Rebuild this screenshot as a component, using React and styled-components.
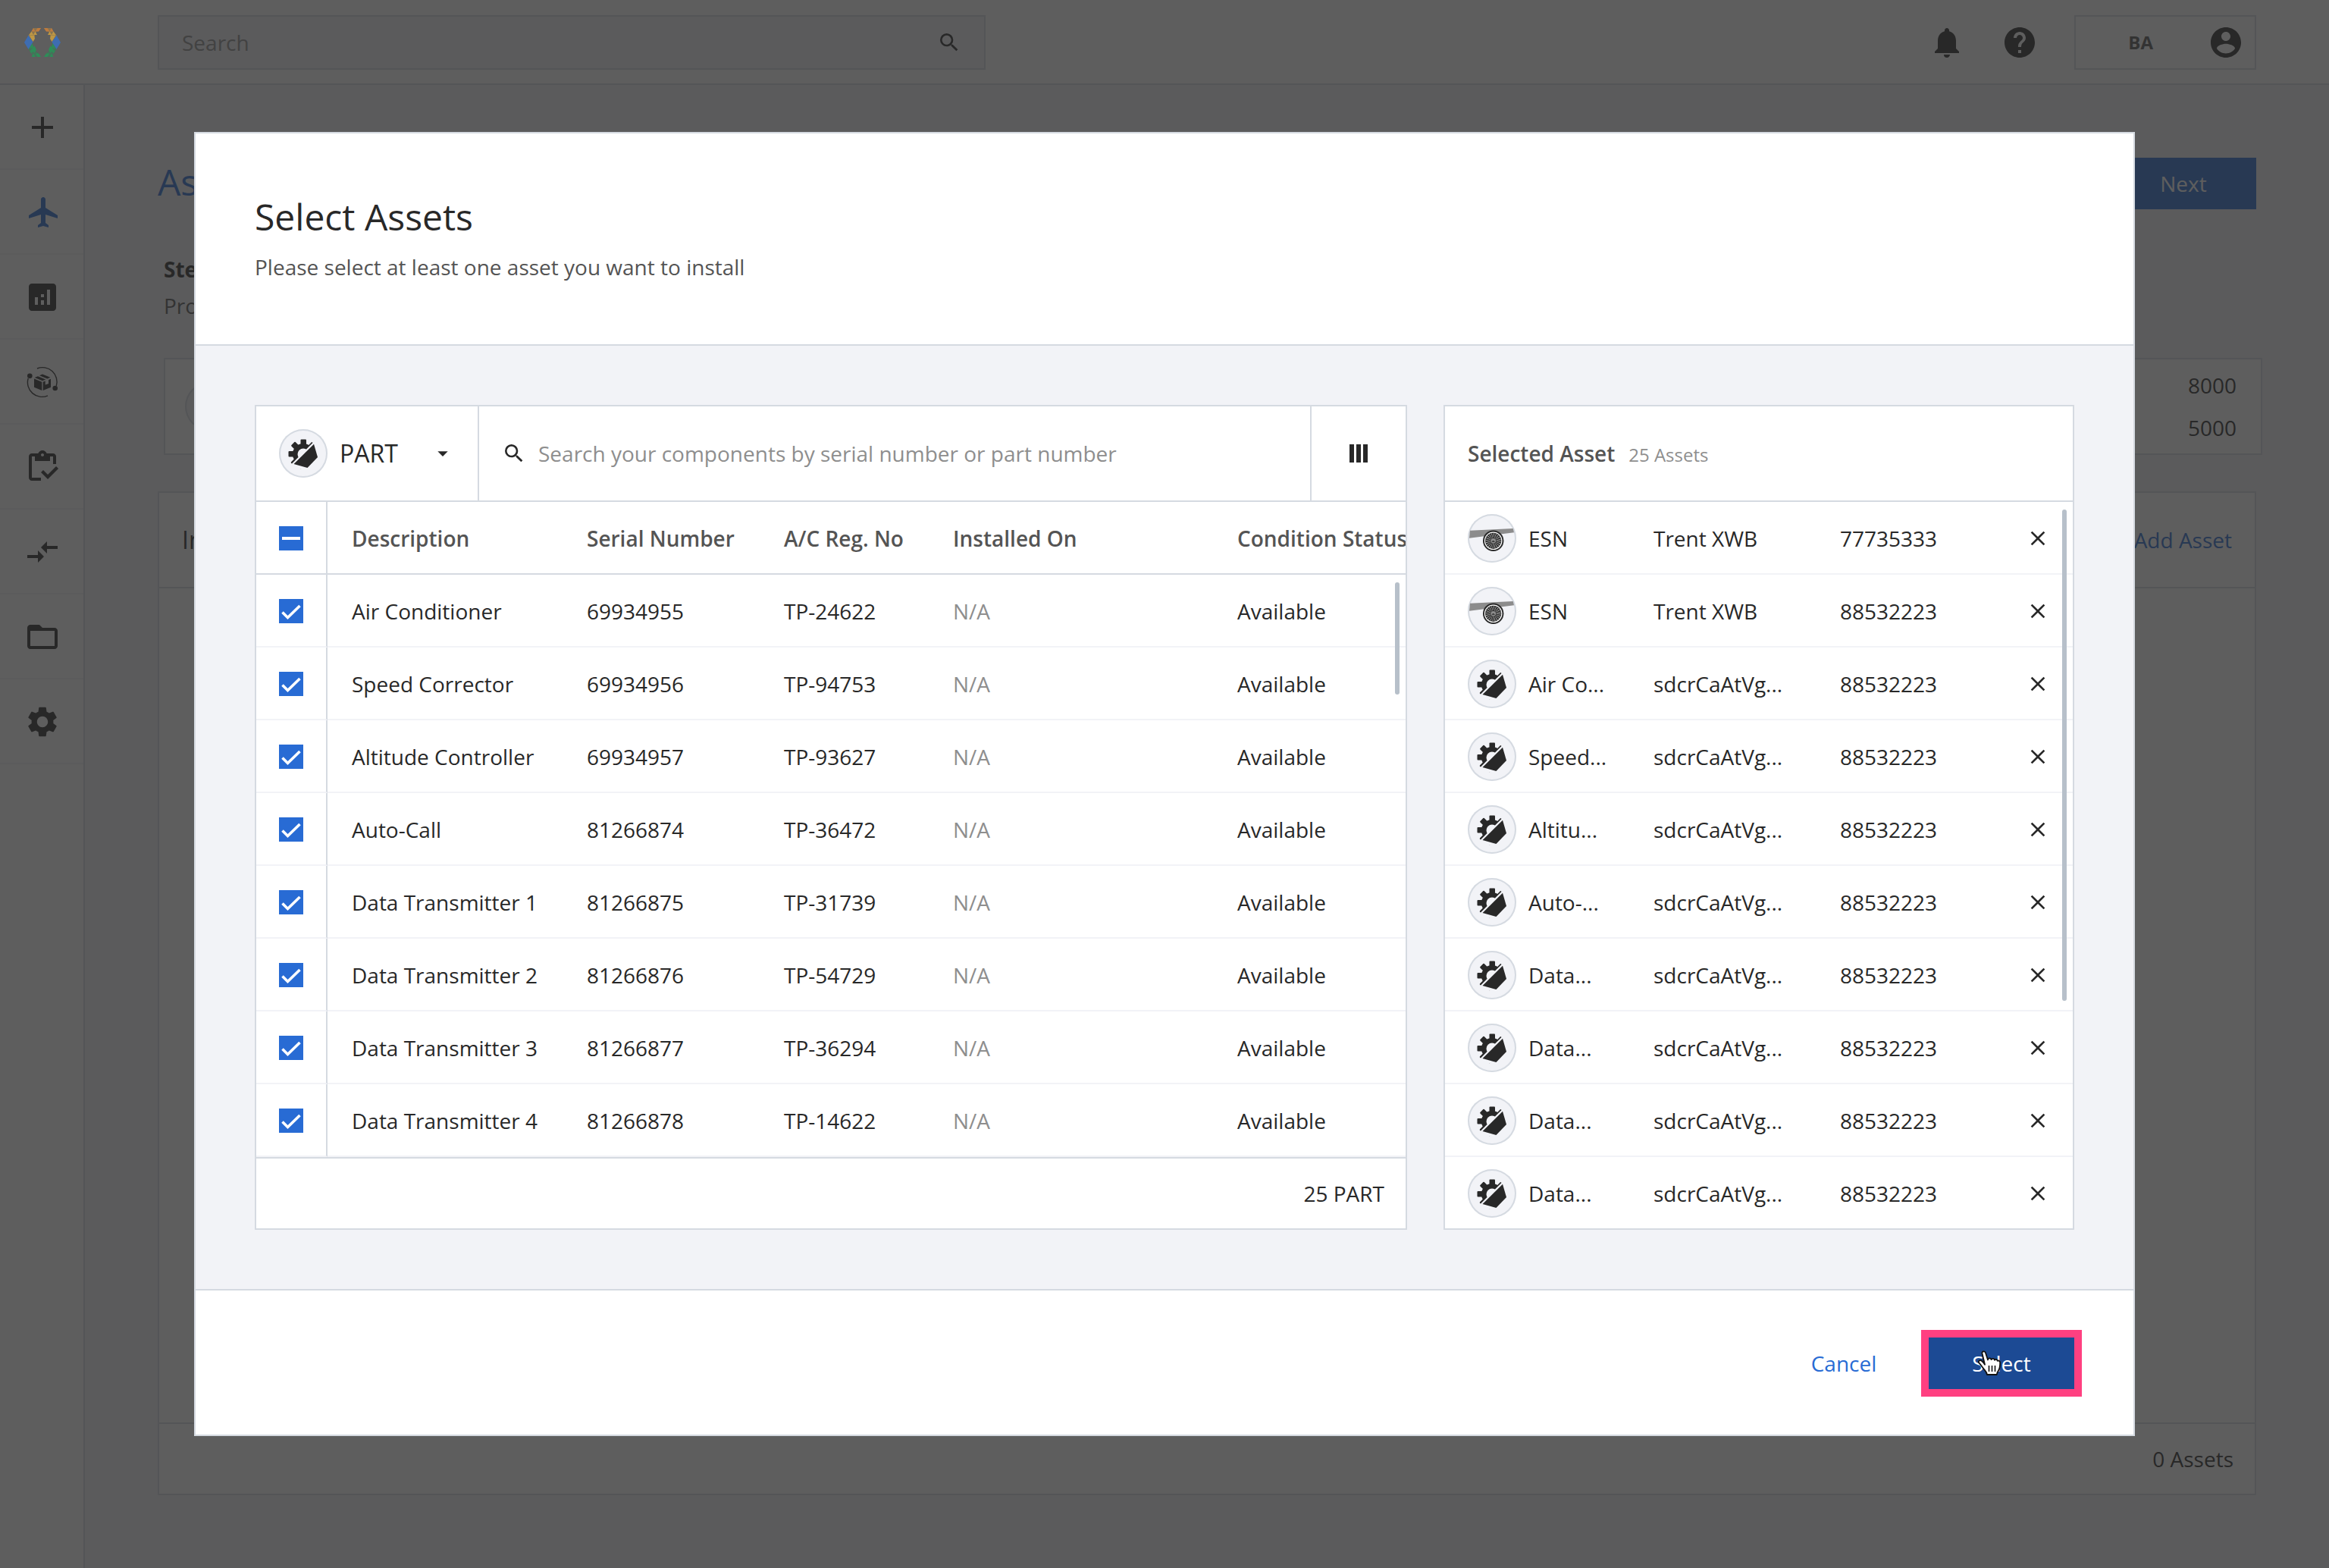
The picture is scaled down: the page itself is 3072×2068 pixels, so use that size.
// Package
import React, { useState } from "react";
import styled, { createGlobalStyle } from "styled-components";
import {
	MdAdd,
	MdAnalytics,
	MdArrowDropDown,
	MdClose,
	MdCompareArrows,
	MdHelp,
	MdNotifications,
	MdSearch,
	MdSettings,
} from "react-icons/md";

/* Data */

const COLUMNS = [
	{ label: "Description", width: 310 },
	{ label: "Serial Number", width: 260 },
	{ label: "A/C Reg. No", width: 223 },
	{ label: "Installed On", width: 375 },
	{ label: "Condition Status" },
];

const PARTS = [
	["Air Conditioner", "69934955", "TP-24622"],
	["Speed Corrector", "69934956", "TP-94753"],
	["Altitude Controller", "69934957", "TP-93627"],
	["Auto-Call", "81266874", "TP-36472"],
	["Data Transmitter 1", "81266875", "TP-31739"],
	["Data Transmitter 2", "81266876", "TP-54729"],
	["Data Transmitter 3", "81266877", "TP-36294"],
	["Data Transmitter 4", "81266878", "TP-14622"],
];

const SELECTED = [
	{ type: "engine", name: "ESN", model: "Trent XWB", serial: "77735333" },
	{ type: "engine", name: "ESN", model: "Trent XWB", serial: "88532223" },
	...["Air Co...", "Speed...", "Altitu...", "Auto-...", "Data...", "Data...", "Data...", "Data..."].map(
		name => ({ type: "part", name, model: "sdcrCaAtVg...", serial: "88532223" })
	),
];

/* Styles */

const colors = {
	text: "#282828",
	soft: "#545454",
	muted: "#8e8e8e",
	blue: "#286bd4",
	navy: "#1c4a94",
	pink: "#ff4081",
	border: "#d5dae1",
	light: "#f2f3f7",
	thumb: "#b7c0ca",
};

const GlobalStyle = createGlobalStyle`
	* {
		box-sizing: border-box;
	}
	body {
		margin: 0;
		background: ${colors.light};
		color: ${colors.text};
		font: 400 28px/48px "Open Sans", sans-serif;
	}
	button, input, select {
		margin: 0;
		padding: 0;
		border: 0;
		background: none;
		color: inherit;
		font: inherit;
	}
	button {
		cursor: pointer;
	}
	h1, h2, p {
		margin: 0;
		font-weight: 400;
	}
	svg {
		display: block;
		flex: none;
	}
`;

// Page
const Page = styled.div`
	display: flex;
	flex-direction: column;
	min-height: 100vh;
`;

const Header = styled.header`
	display: flex;
	align-items: center;
	height: 112px;
	padding: 2px 96px 0 0;
	border-bottom: 2px solid ${colors.border};
	background: #fff;
`;

const LogoLink = styled.a`
	position: relative;
	z-index: 3;
	display: flex;
	justify-content: center;
	width: 112px;
	margin-right: 96px;
	opacity: 0.6;
`;

const HeaderSearch = styled.label`
	display: flex;
	align-items: center;
	flex: 0 1 1092px;
	height: 72px;
	padding: 0 30px;
	border: 2px solid ${colors.border};
	background: ${colors.light};
`;

const SearchInput = styled.input`
	flex: 1;
	min-width: 0;
	outline: 0;
	&::placeholder {
		color: ${colors.muted};
		opacity: 1;
	}
`;

const HeaderActions = styled.div`
	display: flex;
	align-items: center;
	gap: 48px;
	margin-left: auto;
`;

const UserButton = styled.button`
	display: flex;
	align-items: center;
	justify-content: flex-end;
	gap: 72px;
	width: 240px;
	height: 72px;
	padding-right: 14px;
	border: 2px solid ${colors.border};
`;

const UserInitials = styled.span`
	color: ${colors.soft};
	font-size: 24px;
	font-weight: 700;
`;

const Body = styled.div`
	display: flex;
	flex: 1;
`;

const Sidebar = styled.nav`
	flex: none;
	width: 112px;
	border-right: 2px solid ${colors.border};
	background: #fff;
`;

const SidebarLink = styled.a`
	display: flex;
	align-items: center;
	justify-content: center;
	height: 112px;
	padding: 2px 0 0 2px;
	border-bottom: 2px solid ${colors.light};
	color: ${props => (props.$active ? colors.blue : colors.text)};
`;

const Main = styled.main`
	display: flex;
	flex-direction: column;
	flex: 1;
	padding: 96px;
`;

const TitleRow = styled.div`
	display: flex;
	justify-content: space-between;
`;

const PageTitle = styled.h1`
	color: ${colors.blue};
	font-size: 48px;
	line-height: 64px;
`;

const Button = styled.button`
	position: relative;
	width: 192px;
	height: 68px;
	background: ${props => (props.$ghost ? "none" : props.$hover ? colors.navy : colors.blue)};
	color: ${props => (props.$ghost ? colors.blue : "#fff")};
	outline: ${props => (props.$hover ? `10px solid ${colors.pink}` : "0")};
`;

const StepSection = styled.section`
	margin: 55px -8px 48px 8px;
`;

const StepName = styled.p`
	font-weight: 700;
`;

const StepText = styled.p`
	color: ${colors.soft};
`;

const TargetCard = styled.div`
	display: flex;
	align-items: center;
	justify-content: space-between;
	height: 128px;
	margin-top: 45px;
	padding: 0 32px 0 26px;
	border: 2px solid ${colors.border};
	background: #fff;
	line-height: 56px;
`;

const InstallCard = styled.section`
	display: flex;
	flex-direction: column;
	flex: 1;
	border: 2px solid ${colors.border};
	background: #fff;
`;

const InstallHeader = styled.div`
	display: flex;
	align-items: center;
	justify-content: space-between;
	height: 126px;
	padding: 0 30px;
	border-bottom: 2px solid ${colors.border};
`;

const InstallTitle = styled.h2`
	font-size: 32px;
`;

const AddLink = styled.a`
	color: ${colors.blue};
	text-decoration: none;
`;

const CardFooter = styled.footer`
	display: flex;
	align-items: center;
	justify-content: flex-end;
	height: 94px;
	margin-top: auto;
	padding: 0 28px;
	border-top: 2px solid ${colors.border};
`;

// Modal
const Backdrop = styled.div`
	position: fixed;
	inset: 0;
	z-index: 2;
	display: flex;
	align-items: center;
	padding: 0 256px;
	background: rgba(40, 40, 40, 0.75);
`;

const Dialog = styled.section`
	flex: 1;
	min-width: 0;
	border: 2px solid ${colors.border};
	background: #fff;
`;

const DialogHeader = styled.header`
	display: flex;
	flex-direction: column;
	gap: 12px;
	height: 280px;
	padding: 80px 78px;
	border-bottom: 2px solid ${colors.border};
`;

const DialogTitle = styled.h2`
	font-size: 48px;
	line-height: 60px;
`;

const DialogText = styled.p`
	color: ${colors.soft};
`;

const DialogBody = styled.div`
	display: grid;
	grid-template-columns: minmax(0, 1520fr) minmax(0, 832fr);
	gap: 48px;
	padding: 78px;
	background: ${colors.light};
`;

const DialogFooter = styled.footer`
	display: flex;
	justify-content: flex-end;
	gap: 16px;
	padding: 62px 78px 60px;
	border-top: 2px solid ${colors.border};
`;

const Panel = styled.div`
	display: flex;
	flex-direction: column;
	border: 2px solid ${colors.border};
	background: #fff;
`;

const Toolbar = styled.div`
	display: flex;
	align-items: stretch;
	height: 126px;
	border-bottom: 2px solid ${colors.border};
`;

const TypeField = styled.label`
	display: flex;
	align-items: center;
	width: 294px;
	padding: 0 30px;
	border-right: 2px solid ${colors.border};
`;

const TypeSelect = styled.select`
	flex: 1;
	min-width: 0;
	margin-left: 16px;
	appearance: none;
	outline: 0;
	font-size: 32px;
`;

const SearchField = styled.label`
	display: flex;
	align-items: center;
	flex: 1;
	gap: 16px;
	padding: 0 30px;
`;

const ColumnsButton = styled.button`
	display: flex;
	align-items: center;
	justify-content: center;
	width: 126px;
	border-left: 2px solid ${colors.border};
`;

const Scroller = styled.div`
	position: relative;
	overflow: hidden;
`;

const ScrollThumb = styled.span`
	position: absolute;
	top: ${props => props.$top}px;
	right: 8px;
	width: 6px;
	height: ${props => props.$length}px;
	border-radius: 3px;
	background: ${colors.thumb};
`;

const Table = styled.table`
	width: 100%;
	border-spacing: 0;
	table-layout: fixed;
	text-align: left;
	white-space: nowrap;
`;

const HeadCell = styled.th`
	height: 96px;
	padding: 2px 0 0 32px;
	border-bottom: 2px solid ${colors.border};
	color: ${colors.soft};
	font-weight: 600;
`;

const Cell = styled.td`
	height: 96px;
	padding: 2px 0 0 32px;
	border-bottom: 2px solid ${colors.light};
	color: ${props => (props.$muted ? colors.muted : colors.text)};
`;

const CheckCell = styled(Cell)`
	padding-left: 30px;
	border-right: 2px solid ${colors.border};
	border-bottom-color: ${props => (props.$head ? colors.border : colors.light)};
`;

const CheckWrap = styled.span`
	display: grid;
	width: 32px;
	height: 32px;
	svg {
		grid-area: 1 / 1;
		pointer-events: none;
	}
`;

const CheckInput = styled.input`
	grid-area: 1 / 1;
	width: 32px;
	height: 32px;
	appearance: none;
	border: 2px solid ${colors.blue};
	background: #fff;
	&:checked {
		background: ${colors.blue};
	}
`;

const SelectedHeader = styled.div`
	display: flex;
	align-items: baseline;
	gap: 18px;
	height: 126px;
	padding: 38px 30px 0;
	border-bottom: 2px solid ${colors.border};
`;

const SelectedTitle = styled.h2`
	color: ${colors.soft};
	font-size: 28px;
	font-weight: 600;
`;

const SelectedCount = styled.span`
	color: ${colors.muted};
	font-size: 24px;
`;

const SelectedList = styled.ul`
	margin: 0;
	padding: 0;
	list-style: none;
`;

const SelectedRow = styled.li`
	display: grid;
	grid-template-columns: 64px 149px 230px 1fr 32px;
	column-gap: 16px;
	align-items: center;
	height: 96px;
	padding: 2px 30px 0;
	border-bottom: 2px solid ${colors.light};
	white-space: nowrap;
	&:last-child {
		height: 94px;
		border-bottom: 0;
	}
`;

const RemoveButton = styled.button`
	width: 32px;
	height: 32px;
`;

const Avatar = styled.span`
	flex: none;
	width: 64px;
	height: 64px;
	border-radius: 50%;
	background: ${colors.light};
	box-shadow: inset 0 0 0 2px ${colors.border};
`;

const Pointer = styled.svg`
	position: absolute;
	top: 17px;
	left: 64px;
`;

/* Icons */

const LogoHalf = () => (
	<>
		<path d="M9.5 4.500 12 0h10l-3 4.500h-3l-2 5-1 5-2 2.500L5 10z" fill="#f5a82f" opacity=".5" />
		<path d="M5.500 28 11 19l2 8 2 3 4 3.500 3 4.500H12z" fill="#10a050" opacity=".5" />
		<path d="M9.500 4.500 12 0l2.500 4.500zM14.500 4.500 17.500 0H22l-3 4.500z" fill="#ff8f2a" />
		<path d="M6.500 9 9.500 4.500 12 9zM12 9l2.500-4.500L17 9zM6.500 9.500H13l1 4.500-2.500 4z" fill="#ffbf33" />
		<path d="M0 19 5.500 9.500l6 9L5.500 28z" fill="#2a78ea" />
		<path
			d="M6 27.500l4.500-7 1.500 5zM9 28.500l4.500-5 2.500 5-2.500 4.500zM7 29.500h5l-2.500 4zM9.500 38l2.500-4.500 2.500 4.500zM14.500 33.500H19l3 4.500h-4.500z"
			fill="#0fae56"
		/>
	</>
);

const Logo = () => (
	<svg width="48" height="38" viewBox="0 0 48 38">
		<LogoHalf />
		<g transform="matrix(-1 0 0 1 48 0)">
			<LogoHalf />
		</g>
	</svg>
);

const PlaneIcon = () => (
	<svg width="48" height="48" viewBox="-1 0 24 24" fill="currentColor">
		<path d="M21 16v-2l-8-5V3.500c0-.83-.67-1.500-1.500-1.500S10 2.670 10 3.500V9l-8 5v2l8-2.500V19l-2 1.500V22l3.500-1 3.500 1v-1.500L13 19v-5.500l8 2.500z" />
	</svg>
);

const LogisticsIcon = () => (
	<svg width="48" height="48" viewBox="0 0 48 48" fill="currentColor">
		<g fill="none" stroke="currentColor" strokeWidth="1.400">
			<path d="M17 6A19 19 0 0 1 42.300 29" />
			<path d="M5.200 19A19 19 0 0 0 31 41.800" />
		</g>
		<circle cx="40.700" cy="32" r="3.300" />
		<circle cx="7.300" cy="15.700" r="3.300" />
		<path d="M13 19.500l10.300 4.300V35L13 30.700zM24.700 23.800l3-1.200v5l4.300-1.600v-5l3-1.300v11L24.700 35zM13.700 18l4.300-1.800L28.300 20.500 24 22.300zM20 15.300l4-1.800 10.300 4.300-4 1.800z" />
	</svg>
);

const InventoryIcon = () => (
	<svg width="48" height="48" viewBox="0 0 24 24" fill="currentColor">
		<path d="M5 5h2v3h10V5h2v5h2V5c0-1.100-.9-2-2-2h-4.180C14.400 1.840 13.300 1 12 1s-2.400.84-2.820 2H5c-1.100 0-2 .9-2 2v14c0 1.100.9 2 2 2h6v-2H5V5zm7-2c.55 0 1 .45 1 1s-.45 1-1 1-1-.45-1-1 .45-1 1-1z" />
		<path d="M21 11.500 15.510 17l-3.010-3-1.500 1.500 4.510 4.500 7-7z" />
	</svg>
);

const FolderIcon = () => (
	<svg width="48" height="48" viewBox="0 0 24 24" fill="currentColor">
		<path d="M20 6h-8l-2-2H4c-1.100 0-2 .9-2 2v12c0 1.100.9 2 2 2h16c1.100 0 2-.9 2-2V8c0-1.100-.9-2-2-2zm0 12H4V8h16v10z" />
	</svg>
);

const AccountIcon = () => (
	<svg width="48" height="48" viewBox="0 0 24 24" fill={colors.text}>
		<path d="M12 2C6.480 2 2 6.480 2 12s4.480 10 10 10 10-4.480 10-10S17.520 2 12 2zm0 3c1.660 0 3 1.340 3 3s-1.340 3-3 3-3-1.340-3-3 1.340-3 3-3zm0 14.200c-2.500 0-4.710-1.280-6-3.220.03-1.990 4-3.080 6-3.080 1.990 0 5.970 1.090 6 3.080-1.290 1.940-3.500 3.220-6 3.220z" />
	</svg>
);

const ColumnsIcon = () => (
	<svg width="24" height="24" viewBox="0 0 24 24" fill={colors.text}>
		<path d="M0 0h6v24H0zM9 0h6v24H9zM18 0h6v24h-6z" />
	</svg>
);

const PartIcon = () => (
	<svg width="64" height="64" viewBox="0 0 64 64" fill={colors.text}>
		<circle cx="32" cy="33" r="14" />
		{[0, 45, 180, 225, 270, 315].map(angle => (
			<rect
				key={angle}
				x="28.500"
				y="13.500"
				width="7.500"
				height="8"
				rx="1"
				transform={`rotate(${angle} 32 33)`}
			/>
		))}
		<circle cx="32" cy="33" r="7.500" fill={colors.light} />
		<path d="M47 15.500 57 40 40 57 15 47.500z" fill={colors.light} />
		<path d="M46 19.700 51 37 37.500 51 19.500 46z" />
	</svg>
);

const EngineIcon = () => (
	<svg width="64" height="64" viewBox="0 0 64 64">
		<path d="M3 21.700 59.700 19 61 24.300 2 31.700z" fill="#8c8c8c" />
		<circle cx="33.700" cy="35.300" r="13.700" fill={colors.text} />
		<circle cx="33.700" cy="35.300" r="11.200" fill="none" stroke="#fff" strokeWidth="1.200" />
		<circle
			cx="33.700"
			cy="35.300"
			r="7"
			fill="none"
			stroke="#a9a9a9"
			strokeWidth="6"
			strokeDasharray="0.800 1.400"
		/>
		<circle cx="33.700" cy="35.300" r="3.400" fill="#8c8c8c" />
		<path d="M31.500 36.800q2-3.500 4.500 0z" fill={colors.text} />
	</svg>
);

const HandIcon = () => (
	<Pointer width="32" height="34" viewBox="0 0 32 34" aria-hidden="true">
		<path
			d="M6.500 4C6 .8 10 .4 11 3.200l3 9.300c.3-2.600 4-2.800 4.600-.3.800-2 4-1.800 4.400.6 1-1.600 3.400-1 3.700 1 1.800-.8 3.500.3 3.500 2.400 0 5-.2 7.500-2.200 10.300-1.600 2.300-2 3.500-2.200 5.500H13c-.4-2-1-3.400-3-5.800-2.700-3.200-5-7-7.500-9.500-1.800-2.300.8-4.800 3.300-3 1.500 1.200 3 3 4.200 5z"
			fill="#fff"
			stroke="#111"
			strokeWidth="1.800"
			strokeLinejoin="round"
		/>
		<path d="M15.500 20v8M19.500 20v8M23.500 20v8" stroke="#111" strokeWidth="1.600" />
	</Pointer>
);

/* Components */

const NAV_ITEMS = [
	{ label: "Add", icon: <MdAdd size={48} /> },
	{ label: "Aircraft", icon: <PlaneIcon />, active: true },
	{ label: "Analytics", icon: <MdAnalytics size={48} /> },
	{ label: "Logistics", icon: <LogisticsIcon /> },
	{ label: "Inventory", icon: <InventoryIcon /> },
	{ label: "Transfers", icon: <MdCompareArrows size={48} /> },
	{ label: "Documents", icon: <FolderIcon /> },
	{ label: "Settings", icon: <MdSettings size={48} /> },
];

const Checkbox = ({ label, mixed, checked, onChange }) => (
	<CheckWrap>
		<CheckInput type="checkbox" aria-label={label} checked={checked} onChange={onChange} />
		<svg width="32" height="32" viewBox="0 0 32 32">
			{mixed ? (
				<path d="M4 14h24v4H4z" fill="#fff" />
			) : (
				<path d="M4.500 17.500 11.500 24.500 27.500 9" fill="none" stroke="#fff" strokeWidth="3.600" />
			)}
		</svg>
	</CheckWrap>
);

const PartsTable = () => {
	const [checked, setChecked] = useState(PARTS.map(() => true));
	const toggle = index => setChecked(checked.map((value, i) => (i === index ? !value : value)));
	const toggleAll = () => setChecked(checked.map(() => !checked.every(Boolean)));

	return (
		<Scroller>
			<Table>
				<colgroup>
					<col width="94" />
					{COLUMNS.map(column => (
						<col key={column.label} width={column.width} />
					))}
				</colgroup>
				<thead>
					<tr>
						<CheckCell $head>
							<Checkbox
								label="Select all"
								mixed
								checked={checked.some(Boolean)}
								onChange={toggleAll}
							/>
						</CheckCell>
						{COLUMNS.map(column => (
							<HeadCell key={column.label}>{column.label}</HeadCell>
						))}
					</tr>
				</thead>
				<tbody>
					{PARTS.map(([name, serial, registration], index) => (
						<tr key={serial}>
							<CheckCell>
								<Checkbox label={name} checked={checked[index]} onChange={() => toggle(index)} />
							</CheckCell>
							<Cell>{name}</Cell>
							<Cell>{serial}</Cell>
							<Cell>{registration}</Cell>
							<Cell $muted>N/A</Cell>
							<Cell>Available</Cell>
						</tr>
					))}
				</tbody>
			</Table>
			<ScrollThumb $top={106} $length={148} />
		</Scroller>
	);
};

const SelectAssets = () => (
	<Backdrop>
		<Dialog role="dialog" aria-labelledby="dialog-title">
			<DialogHeader>
				<DialogTitle id="dialog-title">Select Assets</DialogTitle>
				<DialogText>Please select at least one asset you want to install</DialogText>
			</DialogHeader>
			<DialogBody>
				<Panel>
					<Toolbar>
						<TypeField>
							<Avatar>
								<PartIcon />
							</Avatar>
							<TypeSelect aria-label="Asset type">
								<option>PART</option>
							</TypeSelect>
							<MdArrowDropDown size={32} />
						</TypeField>
						<SearchField>
							<MdSearch size={32} />
							<SearchInput
								aria-label="Search components"
								placeholder="Search your components by serial number or part number"
							/>
						</SearchField>
						<ColumnsButton aria-label="Columns">
							<ColumnsIcon />
						</ColumnsButton>
					</Toolbar>
					<PartsTable />
					<CardFooter>25 PART</CardFooter>
				</Panel>
				<Panel>
					<SelectedHeader>
						<SelectedTitle>Selected Asset</SelectedTitle>
						<SelectedCount>25 Assets</SelectedCount>
					</SelectedHeader>
					<Scroller>
						<SelectedList>
							{SELECTED.map((asset, i) => (
								<SelectedRow key={i}>
									<Avatar>{asset.type === "engine" ? <EngineIcon /> : <PartIcon />}</Avatar>
									<span>{asset.name}</span>
									<span>{asset.model}</span>
									<span>{asset.serial}</span>
									<RemoveButton aria-label="Remove">
										<MdClose size={32} />
									</RemoveButton>
								</SelectedRow>
							))}
						</SelectedList>
						<ScrollThumb $top={10} $length={648} />
					</Scroller>
				</Panel>
			</DialogBody>
			<DialogFooter>
				<Button $ghost>Cancel</Button>
				<Button $hover>
					Select
					<HandIcon />
				</Button>
			</DialogFooter>
		</Dialog>
	</Backdrop>
);

export default function App() {
	return (
		<Page>
			<GlobalStyle />
			<Header>
				<LogoLink href="#" aria-label="Home">
					<Logo />
				</LogoLink>
				<HeaderSearch>
					<SearchInput aria-label="Search" placeholder="Search" />
					<MdSearch size={32} />
				</HeaderSearch>
				<HeaderActions>
					<button aria-label="Notifications">
						<MdNotifications size={48} />
					</button>
					<button aria-label="Help">
						<MdHelp size={48} />
					</button>
					<UserButton>
						<UserInitials>BA</UserInitials>
						<AccountIcon />
					</UserButton>
				</HeaderActions>
			</Header>
			<Body>
				<Sidebar>
					{NAV_ITEMS.map(item => (
						<SidebarLink key={item.label} href="#" aria-label={item.label} $active={item.active}>
							{item.icon}
						</SidebarLink>
					))}
				</Sidebar>
				<Main>
					<TitleRow>
						<PageTitle>Assets</PageTitle>
						<Button>Next</Button>
					</TitleRow>
					<StepSection>
						<StepName>Step</StepName>
						<StepText>Provide</StepText>
						<TargetCard>
							<Avatar />
							<div>
								<div>8000</div>
								<div>5000</div>
							</div>
						</TargetCard>
					</StepSection>
					<InstallCard>
						<InstallHeader>
							<InstallTitle>Install</InstallTitle>
							<AddLink href="#">Add Asset</AddLink>
						</InstallHeader>
						<CardFooter>0 Assets</CardFooter>
					</InstallCard>
				</Main>
			</Body>
			<SelectAssets />
		</Page>
	);
}
